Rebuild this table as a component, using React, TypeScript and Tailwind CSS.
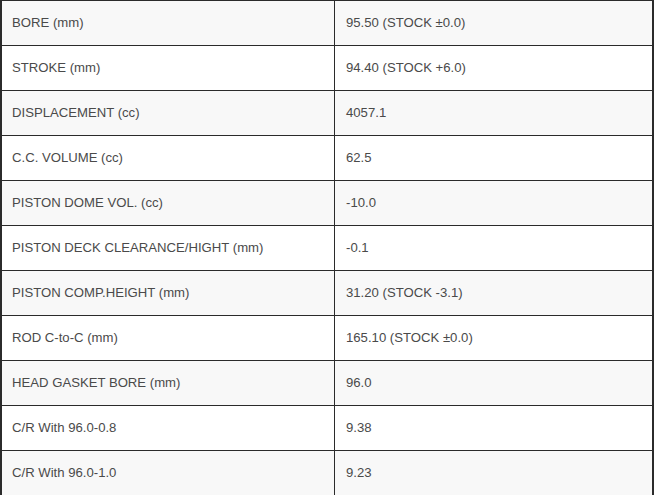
const rows: [string, string][] = [
  ['BORE (mm)', '95.50 (STOCK ±0.0)'],
  ['STROKE (mm)', '94.40 (STOCK +6.0)'],
  ['DISPLACEMENT (cc)', '4057.1'],
  ['C.C. VOLUME (cc)', '62.5'],
  ['PISTON DOME VOL. (cc)', '-10.0'],
  ['PISTON DECK CLEARANCE/HIGHT (mm)', '-0.1'],
  ['PISTON COMP.HEIGHT (mm)', '31.20 (STOCK -3.1)'],
  ['ROD C-to-C (mm)', '165.10 (STOCK ±0.0)'],
  ['HEAD GASKET BORE (mm)', '96.0'],
  ['C/R With 96.0-0.8', '9.38'],
  ['C/R With 96.0-1.0', '9.23'],
];

export default function App() {
  return (
    <div className="w-[654px] h-[495px] overflow-hidden bg-white">
      <div
        className="w-[654px] border-t border-l-2 border-r-2 border-[#2b2b2b] text-[13.15px] text-[#4a4a4a]"
        style={{ fontFamily: '"Liberation Sans", Arial, sans-serif' }}
      >
        {rows.map(([label, value], i) => (
          <div
            key={label}
            className={`flex h-[45px] border-b border-[#2b2b2b] ${i % 2 === 0 ? 'bg-[#f8f8f8]' : 'bg-white'}`}
          >
            <div className="w-[333px] flex items-center pl-[10px] border-r border-[#2b2b2b]">{label}</div>
            <div className="flex-1 flex items-center pl-[11px]">{value}</div>
          </div>
        ))}
      </div>
    </div>
  );
}
